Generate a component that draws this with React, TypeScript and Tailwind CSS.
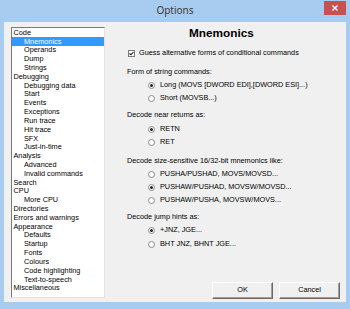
import React from "react";

const tree: { label: string; level: number; selected?: boolean }[] = [
  { label: "Code", level: 0 },
  { label: "Mnemonics", level: 1, selected: true },
  { label: "Operands", level: 1 },
  { label: "Dump", level: 1 },
  { label: "Strings", level: 1 },
  { label: "Debugging", level: 0 },
  { label: "Debugging data", level: 1 },
  { label: "Start", level: 1 },
  { label: "Events", level: 1 },
  { label: "Exceptions", level: 1 },
  { label: "Run trace", level: 1 },
  { label: "Hit trace", level: 1 },
  { label: "SFX", level: 1 },
  { label: "Just-in-time", level: 1 },
  { label: "Analysis", level: 0 },
  { label: "Advanced", level: 1 },
  { label: "Invalid commands", level: 1 },
  { label: "Search", level: 0 },
  { label: "CPU", level: 0 },
  { label: "More CPU", level: 1 },
  { label: "Directories", level: 0 },
  { label: "Errors and warnings", level: 0 },
  { label: "Appearance", level: 0 },
  { label: "Defaults", level: 1 },
  { label: "Startup", level: 1 },
  { label: "Fonts", level: 1 },
  { label: "Colours", level: 1 },
  { label: "Code highlighting", level: 1 },
  { label: "Text-to-speech", level: 1 },
  { label: "Miscellaneous", level: 0 },
];

function Radio({ checked, label, className = "" }: { checked?: boolean; label: string; className?: string }) {
  return (
    <div className={`h-[13px] flex items-center pl-[43px] ${className}`}>
      <span className="w-[7px] h-[7px] rounded-full border border-[#8c8c8c] bg-white flex items-center justify-center">
        {checked && <span className="w-[3px] h-[3px] rounded-full bg-[#222]" />}
      </span>
      <span className="ml-[5px]">{label}</span>
    </div>
  );
}

function Label({ text, className = "" }: { text: string; className?: string }) {
  return <div className={`h-[13px] flex items-center pl-[22px] ${className}`}>{text}</div>;
}

function Button({ text }: { text: string }) {
  return (
    <button className="w-[61px] h-[17px] bg-[#f0f0f0] border border-t-white border-l-white border-r-[#696969] border-b-[#696969] shadow-[inset_-1px_-1px_0_#a0a0a0] flex items-center justify-center text-black">
      {text}
    </button>
  );
}

export default function App() {
  return (
    <div
      className="w-[350px] h-[309px] bg-[#a8cbf0] flex flex-col text-[7.3px] text-black"
      style={{ fontFamily: '"Liberation Sans", Arial, sans-serif' }}
    >
      {/* title bar */}
      <div className="h-[22px] grid grid-cols-[1fr_auto_1fr]">
        <div />
        <div
          className="flex items-center justify-center text-[10px] text-[#3b3b3b] pb-[2px]"
          style={{ fontFamily: '"Noto Sans", sans-serif' }}
        >
          Options
        </div>
        <div className="flex justify-end pr-[4px]">
          <div className="w-[22px] h-[14px] mt-[1px] bg-[#c75050] flex items-center justify-center">
            <svg width="6" height="6" viewBox="0 0 6 6">
              <path d="M0.5 0.5L5.5 5.5M5.5 0.5L0.5 5.5" stroke="white" strokeWidth="1.4" />
            </svg>
          </div>
        </div>
      </div>

      {/* client area */}
      <div className="flex-1 mx-[4px] mb-[7px] bg-[#f0f0f0] flex">
        {/* tree */}
        <div className="ml-[7px] mt-[5px] mb-[4px] w-[94px] border border-t-[#7a7a7a] border-l-[#7a7a7a] border-r-[#e3e3e3] border-b-[#e3e3e3] bg-white">
          {tree.map((t) => (
            <div
              key={t.label}
              className={`h-[8.82px] flex items-center leading-none text-[7.3px] ${
                t.level === 1 ? "pl-[12px]" : "pl-[1.5px]"
              } ${t.selected ? "bg-[#3399ff] text-white" : ""}`}
            >
              {t.label}
            </div>
          ))}
        </div>

        {/* right panel */}
        <div className="flex-1 flex flex-col">
          <div className="h-[16px] mt-[4px] flex items-center pl-[84px] text-[11.8px] font-bold">
            Mnemonics
          </div>
          <div className="h-[13px] mt-[4.5px] flex items-center pl-[23px]">
            <span className="w-[7px] h-[7px] border border-[#7a7a7a] bg-white flex items-center justify-center">
              <svg width="5" height="5" viewBox="0 0 5 5">
                <path d="M0.5 2.3L2 3.8L4.5 1" stroke="#111" strokeWidth="1.1" fill="none" />
              </svg>
            </span>
            <span className="ml-[4px]">Guess alternative forms of conditional commands</span>
          </div>
          <Label text="Form of string commands:" className="mt-[6.7px]" />
          <Radio checked label="Long (MOVS [DWORD EDI],[DWORD ESI]...)" />
          <Radio label="Short (MOVSB...)" />
          <Label text="Decode near returns as:" className="mt-[4px]" />
          <Radio checked label="RETN" className="mt-[1px]" />
          <Radio label="RET" />
          <Label text="Decode size-sensitive 16/32-bit mnemonics like:" className="mt-[6px]" />
          <Radio label="PUSHA/PUSHAD, MOVS/MOVSD..." />
          <Radio checked label="PUSHAW/PUSHAD, MOVSW/MOVSD..." />
          <Radio label="PUSHAW/PUSHA, MOVSW/MOVS..." />
          <Label text="Decode jump hints as:" className="mt-[3.7px]" />
          <Radio checked label="+JNZ, JGE..." />
          <Radio label="BHT JNZ, BHNT JGE..." className="mt-[1.3px]" />
          <div className="mt-auto mb-[3px] flex justify-end gap-[6px] pr-[6px]">
            <Button text="OK" />
            <Button text="Cancel" />
          </div>
        </div>
      </div>
    </div>
  );
}
